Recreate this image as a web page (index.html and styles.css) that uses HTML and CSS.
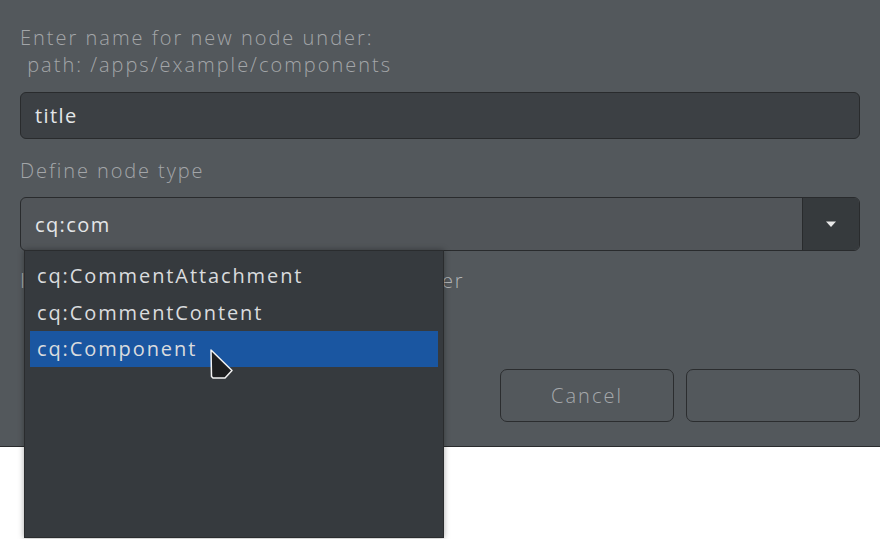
FILE: index.html
```html
<!DOCTYPE html>
<html>
<head>
<meta charset="utf-8">
<link rel="stylesheet" href="styles.css">
</head>
<body>
<div class="dialog">
  <div class="prompt">Enter name for new node under:<br>&nbsp;path: /apps/example/components</div>
  <div class="input"><span>title</span></div>
  <div class="label">Define node type</div>
  <div class="combo">
    <div class="combo-text">cq:com</div>
    <div class="combo-btn"><svg width="12" height="7" viewBox="0 0 12 7"><path d="M1 0.5 L11 0.5 L6 6 Z" fill="#e8e8e8"/></svg></div>
  </div>
  <div class="check-row">Include properties from the parent folder</div>
  <div class="buttons">
    <div class="btn">Cancel</div>
    <div class="btn"></div>
  </div>
</div>
<div class="popup">
  <div class="item">cq:CommentAttachment</div>
  <div class="item">cq:CommentContent</div>
  <div class="item selected">cq:Component</div>
</div>
<svg class="cursor" width="26" height="32" viewBox="0 0 26 32"><path d="M2 2 L2.5 28.5 L4 30 L16 30 L23 22.5 Z" fill="#1d1e20" stroke="#f2f2f2" stroke-width="1.5" stroke-linejoin="round"/></svg>
</body>
</html>
```
FILE: styles.css
```css
html, body { margin: 0; padding: 0; }
body {
  width: 880px;
  height: 539px;
  background: #ffffff;
  position: relative;
  overflow: hidden;
  font-family: "Open Sans", "Noto Sans", sans-serif;
}
.dialog {
  box-sizing: border-box;
  height: 447px;
  background: #53585c;
  border-bottom: 1px solid #2a2c2e;
  padding: 24px 20px 0 20px;
  display: flex;
  flex-direction: column;
}
.prompt {
  color: #a3a6a9;
  font-size: 20px;
  font-weight: 300;
  letter-spacing: 2px;
  line-height: 27px;
  height: 54px;
  white-space: nowrap;
}
.input {
  margin-top: 14px;
  box-sizing: border-box;
  height: 47px;
  background: #3c4044;
  border: 1.5px solid #292b2d;
  border-radius: 6px;
  display: flex;
  align-items: center;
  padding-left: 14px;
  color: #e4e6e8;
  font-size: 20px;
  letter-spacing: 1.4px;
}
.label {
  margin-top: 18px;
  height: 28px;
  line-height: 28px;
  color: #a3a6a9;
  font-size: 20px;
  font-weight: 300;
  letter-spacing: 1.9px;
}
.combo {
  margin-top: 12px;
  box-sizing: border-box;
  height: 54px;
  border: 1.5px solid #292b2d;
  border-radius: 6px;
  display: flex;
  overflow: hidden;
  background: #515559;
}
.combo-text {
  flex: 1;
  display: flex;
  align-items: center;
  padding-left: 14px;
  color: #e4e6e8;
  font-size: 20px;
  letter-spacing: 1.4px;
}
.combo-btn {
  width: 56px;
  background: #363a3d;
  border-left: 1.5px solid #292b2d;
  display: flex;
  align-items: center;
  justify-content: center;
}
.check-row {
  margin-top: 16px;
  height: 28px;
  line-height: 28px;
  color: #b0b3b5;
  font-size: 20px;
  font-weight: 300;
  letter-spacing: 1.8px;
  white-space: nowrap;
}
.buttons {
  margin-top: 74px;
  display: flex;
  justify-content: flex-end;
  gap: 12px;
}
.btn {
  box-sizing: border-box;
  width: 174px;
  height: 53px;
  border: 1.5px solid #2b2d2f;
  border-radius: 7px;
  display: flex;
  align-items: center;
  justify-content: center;
  color: #a6a9ac;
  font-size: 20px;
  font-weight: 300;
  letter-spacing: 2px;
}
.popup {
  position: absolute;
  left: 24px;
  top: 250px;
  width: 420px;
  height: 288px;
  box-sizing: border-box;
  background: #363a3e;
  border: 1px solid #2a2c2e;
  padding: 6px 5px 0 5px;
  box-shadow: 0 0 6px rgba(0,0,0,0.35);
}
.item {
  height: 37px;
  line-height: 37px;
  padding-left: 7px;
  color: #dadcde;
  font-size: 20px;
  letter-spacing: 1.9px;
}
.item.selected {
  background: #1a56a1;
  height: 36px;
  line-height: 36px;
}
.cursor {
  position: absolute;
  left: 209px;
  top: 348px;
}
```
